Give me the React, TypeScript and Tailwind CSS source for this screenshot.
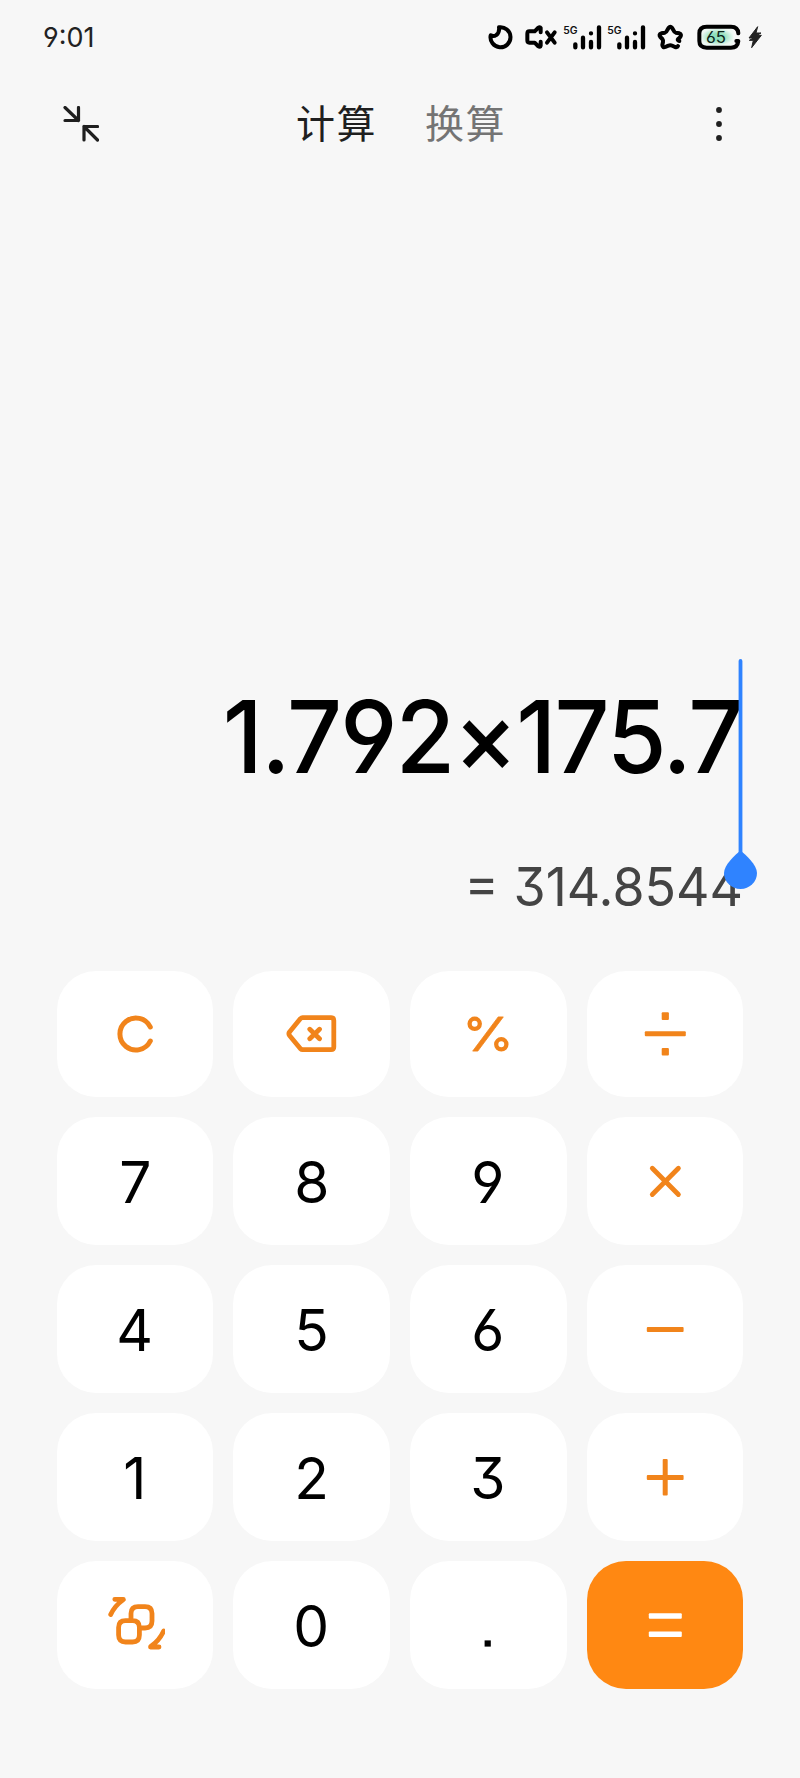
import type { ReactNode } from 'react'

function MoonIcon() {
  return (
    <svg width="35" height="28" viewBox="0 0 105 84" fill="none" stroke="#000" strokeWidth="12" strokeLinejoin="round">
      <path d="M36 13A30 30 0 1 1 11 37Q20 42 28 36Q38 29 36 13Z" />
    </svg>
  )
}

function MuteIcon() {
  return (
    <svg width="40" height="28" viewBox="0 0 120 84" fill="none" stroke="#000" strokeWidth="12" strokeLinecap="round" strokeLinejoin="round">
      <path d="M56 28V15Q54 11 48 15L38 25H22Q16 25 16 32V52Q16 59 22 59H38L48 69Q55 74 56 68V56" />
      <path d="M75 28L98 59M98 28L75 59" strokeWidth="12" />
    </svg>
  )
}

function SignalIcon() {
  return (
    <svg width="44" height="28" viewBox="0 0 132 84" stroke="#000" strokeWidth="13" strokeLinecap="round">
      <text x="4" y="34" fontSize="29" fontWeight="600" fill="#111" stroke="none" textLength="43" lengthAdjust="spacingAndGlyphs">5G</text>
      <path d="M40 64V73M63 44V73M87 57V73M111 13V73M87 31V31.1" />
    </svg>
  )
}

function StarIcon() {
  return (
    <svg width="45" height="28" viewBox="0 0 135 84" fill="none" stroke="#000" strokeWidth="12" strokeLinecap="round" strokeLinejoin="round">
      <path d="M88 54Q80 52 85 47L91 42Q96 34 88 31L77 29Q73 28 70 21L66 14Q61 8 56 14L52 21Q49 28 45 29L34 31Q25 34 31 42L37 48Q40 52 39 57L37 66Q38 75 46 72L55 68Q61 65 67 68L75 72Q82 74 84 69" />
    </svg>
  )
}

function BatteryIcon() {
  return (
    <svg width="50" height="28" viewBox="0 0 150 84" fill="none">
      <defs>
        <radialGradient id="charge">
          <stop offset="0.4" stopColor="#8fe0bb" />
          <stop offset="1" stopColor="#eef8f3" />
        </radialGradient>
      </defs>
      <rect x="18" y="16" width="98" height="52" rx="14" fill="url(#charge)" />
      <path d="M130 31Q129 11 108 11H35Q13 11 13 31V54Q13 74 35 74H108Q128 74 130 54H124" stroke="#000" strokeWidth="12" strokeLinecap="round" strokeLinejoin="round" />
      <text x="33" y="60" fontSize="47" fill="#0b2318" textLength="60" lengthAdjust="spacingAndGlyphs">65</text>
    </svg>
  )
}

function BoltIcon() {
  return (
    <svg width="20" height="28" viewBox="0 0 60 84" fill="#222" stroke="#222" strokeWidth="3" strokeLinejoin="round">
      <path d="M38 11L12 45H25L13 52H25L20 74L49 37H36L48 30H33Z" />
    </svg>
  )
}

function StatusBar() {
  return (
    <div className="flex h-[74px] items-center justify-between pl-[43px] pr-[35px]">
      <span className="origin-left scale-x-[.98] pt-px text-[27.5px] leading-none text-[#222]">9:01</span>
      <div className="flex items-center">
        <MoonIcon />
        <MuteIcon />
        <SignalIcon />
        <SignalIcon />
        <StarIcon />
        <BatteryIcon />
        <BoltIcon />
      </div>
    </div>
  )
}

function Header() {
  return (
    <header className="flex h-[99px] items-center justify-between pl-[63px] pr-[75px]">
      <svg width="36" height="36" viewBox="0 0 36 36" fill="none" stroke="#1f1f1f" strokeWidth="3.2" strokeLinecap="round" strokeLinejoin="round">
        <path d="M2 1.500L15.500 14.500M15.500 1.500V14.500H2M34.500 34L21 20.500M21 34V20.500H34.500" />
      </svg>
      <nav className="mr-[10px] flex gap-[48px] text-[39px] leading-none tracking-[1.5px]">
        <span className="text-[#1f1f1f]">计算</span>
        <span className="text-[#747474]">换算</span>
      </nav>
      <svg width="12" height="36" viewBox="0 0 12 36" fill="#1f1f1f">
        <circle cx="6" cy="4" r="2.9" />
        <circle cx="6" cy="18" r="2.9" />
        <circle cx="6" cy="32" r="2.9" />
      </svg>
    </header>
  )
}

function Display() {
  return (
    <section className="flex h-[797.5px] flex-col items-end justify-end pr-[57px] pb-[53.5px]">
      <div className="relative z-10 mb-[60px] pr-[1px]">
        <div className="origin-right scale-x-[.965] whitespace-nowrap text-[100px] font-medium leading-[120px] tracking-[-1.8px]">1.792×175.7</div>
        <svg className="absolute -right-[14px] -top-[18px]" width="33" height="230" viewBox="0 0 33 230" fill="#2f83ff">
          <rect x="14.6" y="0" width="3.8" height="196" rx="1.9" />
          <path d="M16.5 191.5C22 196 33 206 33 214A16.5 16 0 0 1 0 214C0 206 11 196 16.5 191.5Z" />
        </svg>
      </div>
      <div className="origin-right scale-x-[.97] whitespace-nowrap text-[53.5px] leading-[60px] text-[#444]">= 314.8544</div>
    </section>
  )
}

function Stroked({ d, width = 5 }: { d: string; width?: number }) {
  return (
    <svg width="60" height="60" viewBox="0 0 60 60" fill="none" stroke="#f1841b" strokeWidth={width} strokeLinecap="round" strokeLinejoin="round">
      <path d={d} />
    </svg>
  )
}

const percent = (
  <svg width="60" height="60" viewBox="0 0 60 60" fill="none" stroke="#f1841b">
    <circle cx="16.7" cy="19.8" r="5.1" strokeWidth="4.3" />
    <circle cx="43.3" cy="40.3" r="5.1" strokeWidth="4.3" />
    <path d="M40.200 12.900H45.300L19.800 47.100H14.700Z" fill="#f1841b" strokeWidth="0.8" strokeLinejoin="round" />
  </svg>
)

const divide = (
  <svg width="60" height="60" viewBox="0 0 60 60" fill="#f1841b">
    <rect x="26.7" y="8.3" width="7.2" height="7.6" rx="1" />
    <rect x="9.8" y="27.3" width="41" height="5" rx="1" />
    <rect x="26.7" y="44" width="7.2" height="7.4" rx="1" />
  </svg>
)

const minus = (
  <svg width="60" height="60" viewBox="0 0 60 60" fill="#f1841b">
    <rect x="11.8" y="28" width="36.8" height="5" rx="1" />
  </svg>
)

const plus = (
  <svg width="60" height="60" viewBox="0 0 60 60" fill="#f1841b">
    <rect x="11.8" y="28" width="36.8" height="5" rx="1" />
    <rect x="27.7" y="11.9" width="5" height="36.5" rx="1" />
  </svg>
)

const equals = (
  <svg width="60" height="60" viewBox="0 0 60 60" fill="#fff">
    <rect x="13.8" y="18.2" width="33" height="5.6" rx="1" />
    <rect x="13.8" y="36.5" width="33" height="5.6" rx="1" />
  </svg>
)

const dot = (
  <svg width="60" height="60" viewBox="0 0 60 60" fill="#000">
    <rect x="26.6" y="45.4" width="6.2" height="6.2" />
  </svg>
)

const SWAP =
  'M26 25.6V18.5Q26 11.6 33 11.6H40Q47 11.6 47 18.5V26Q47 33 40 33H35M20.5 25.6H27.5Q34.4 25.6 34.4 32.5V40Q34.4 47 27.5 47H20.5Q13.6 47 13.6 40V32.5Q13.6 25.6 20.5 25.6Z'
const SWAP_ARROWS = 'M5.7 19.5Q9.5 11 18.3 4.6L14 5.5M9.8 4.3H18.3M58.7 36Q54.5 45.5 46 51.3L50 50.2M45.5 52H54'

const keys: { id: string; face: ReactNode }[] = [
  { id: 'clear', face: <Stroked d="M45.3 23A16 16 0 1 0 45.3 37" /> },
  { id: 'backspace', face: <Stroked width={4.8} d="M20.5 13.6H49Q51.8 13.6 51.8 16.4V43Q51.8 45.7 49 45.7H20.5Q19.5 45.7 18.5 44.7L7.5 31.5Q6.3 29.7 7.5 28L18.5 14.6Q19.5 13.6 20.5 13.6ZM27.8 25.3L37.5 34.8M37.5 25.3L27.8 34.8" /> },
  { id: 'percent', face: percent },
  { id: 'divide', face: divide },
  { id: '7', face: '7' },
  { id: '8', face: '8' },
  { id: '9', face: '9' },
  { id: 'multiply', face: <Stroked d="M17.3 17.3L43.4 43.5M43.4 17.3L17.3 43.5" width={4.8} /> },
  { id: '4', face: '4' },
  { id: '5', face: '5' },
  { id: '6', face: '6' },
  { id: 'minus', face: minus },
  { id: '1', face: '1' },
  { id: '2', face: '2' },
  { id: '3', face: '3' },
  { id: 'plus', face: plus },
  { id: 'convert', face: <Stroked width={4.8} d={SWAP + SWAP_ARROWS} /> },
  { id: '0', face: '0' },
  { id: 'dot', face: dot },
  { id: 'equals', face: equals },
]

function Keypad() {
  return (
    <main className="grid grid-cols-4 grid-rows-[126.5px_128px_128px_128px_127.5px] gap-5 px-[56.75px]">
      {keys.map(({ id, face }) => (
        <button
          key={id}
          aria-label={id}
          className={`flex items-center justify-center rounded-[39px] text-[58px] leading-none ${id === 'equals' ? 'bg-[#ff8812]' : 'bg-white'}`}
        >
          {typeof face === 'string' ? <span className="scale-x-[.98] pt-[2px]">{face}</span> : face}
        </button>
      ))}
    </main>
  )
}

export default function App() {
  return (
    <div className="h-[1778px] w-[800px] overflow-hidden bg-[#f7f7f7] font-[Inter,'Noto_Sans_CJK_SC',sans-serif] text-black [font-feature-settings:'cv03','cv04','cv09']">
      <StatusBar />
      <Header />
      <Display />
      <Keypad />
    </div>
  )
}
